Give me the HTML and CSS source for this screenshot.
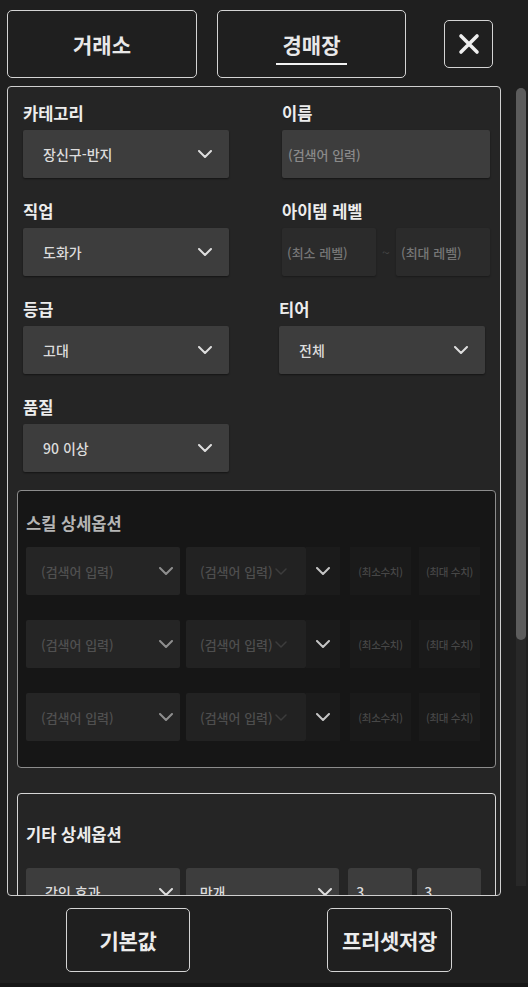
FILE: index.html
```html
<!DOCTYPE html>
<html lang="ko">
<head>
<meta charset="utf-8">
<title>경매장</title>
<link rel="stylesheet" href="styles.css">
</head>
<body>
<div class="app">
  <header class="topbar">
    <button class="tab">거래소</button>
    <button class="tab active"><span class="tab-label">경매장</span></button>
    <button class="close" aria-label="닫기">
      <svg width="22" height="22" viewBox="0 0 22 22"><path d="M3 3 L19 19 M19 3 L3 19" stroke="#eeeeee" stroke-width="3.6" stroke-linecap="round" fill="none"/></svg>
    </button>
  </header>

  <div class="body-row">
    <div class="panel">
      <div class="filters">
        <div class="field">
          <div class="label">카테고리</div>
          <div class="select"><span>장신구-반지</span><svg class="chev" width="14" height="8" viewBox="0 0 14 8"><polyline points="1,1 7,7 13,1"/></svg></div>
        </div>
        <div class="field">
          <div class="label">이름</div>
          <div class="input"><span>(검색어 입력)</span></div>
        </div>
        <div class="field">
          <div class="label">직업</div>
          <div class="select"><span>도화가</span><svg class="chev" width="14" height="8" viewBox="0 0 14 8"><polyline points="1,1 7,7 13,1"/></svg></div>
        </div>
        <div class="field">
          <div class="label">아이템 레벨</div>
          <div class="range">
            <div class="input dim"><span>(최소 레벨)</span></div>
            <span class="tilde">~</span>
            <div class="input dim"><span>(최대 레벨)</span></div>
          </div>
        </div>
        <div class="field">
          <div class="label">등급</div>
          <div class="select"><span>고대</span><svg class="chev" width="14" height="8" viewBox="0 0 14 8"><polyline points="1,1 7,7 13,1"/></svg></div>
        </div>
        <div class="field shift">
          <div class="label">티어</div>
          <div class="select"><span>전체</span><svg class="chev" width="14" height="8" viewBox="0 0 14 8"><polyline points="1,1 7,7 13,1"/></svg></div>
        </div>
        <div class="field">
          <div class="label">품질</div>
          <div class="select"><span>90 이상</span><svg class="chev" width="14" height="8" viewBox="0 0 14 8"><polyline points="1,1 7,7 13,1"/></svg></div>
        </div>
      </div>

      <section class="opt-box skill">
        <h3 class="opt-title">스킬 상세옵션</h3>
        <div class="opt-rows">
          <div class="opt-row">
            <div class="s-dd1"><span>(검색어 입력)</span><svg class="chev" width="14" height="8" viewBox="0 0 14 8"><polyline points="1,1 7,7 13,1"/></svg></div>
            <div class="s-dd2"><span>(검색어 입력)</span><svg class="chev small" width="12" height="7" viewBox="0 0 12 7"><polyline points="1,1 6,6 11,1"/></svg></div>
            <div class="s-chev"><svg class="chev" width="14" height="8" viewBox="0 0 14 8"><polyline points="1,1 7,7 13,1"/></svg></div>
            <div class="s-num">(최소수치)</div>
            <div class="s-num">(최대 수치)</div>
          </div>
          <div class="opt-row">
            <div class="s-dd1"><span>(검색어 입력)</span><svg class="chev" width="14" height="8" viewBox="0 0 14 8"><polyline points="1,1 7,7 13,1"/></svg></div>
            <div class="s-dd2"><span>(검색어 입력)</span><svg class="chev small" width="12" height="7" viewBox="0 0 12 7"><polyline points="1,1 6,6 11,1"/></svg></div>
            <div class="s-chev"><svg class="chev" width="14" height="8" viewBox="0 0 14 8"><polyline points="1,1 7,7 13,1"/></svg></div>
            <div class="s-num">(최소수치)</div>
            <div class="s-num">(최대 수치)</div>
          </div>
          <div class="opt-row">
            <div class="s-dd1"><span>(검색어 입력)</span><svg class="chev" width="14" height="8" viewBox="0 0 14 8"><polyline points="1,1 7,7 13,1"/></svg></div>
            <div class="s-dd2"><span>(검색어 입력)</span><svg class="chev small" width="12" height="7" viewBox="0 0 12 7"><polyline points="1,1 6,6 11,1"/></svg></div>
            <div class="s-chev"><svg class="chev" width="14" height="8" viewBox="0 0 14 8"><polyline points="1,1 7,7 13,1"/></svg></div>
            <div class="s-num">(최소수치)</div>
            <div class="s-num">(최대 수치)</div>
          </div>
        </div>
      </section>

      <section class="opt-box etc">
        <h3 class="opt-title">기타 상세옵션</h3>
        <div class="opt-rows">
          <div class="opt-row">
            <div class="e-dd"><span>각인 효과</span><svg class="chev" width="14" height="8" viewBox="0 0 14 8"><polyline points="1,1 7,7 13,1"/></svg></div>
            <div class="e-dd second"><span>만개</span><svg class="chev" width="14" height="8" viewBox="0 0 14 8"><polyline points="1,1 7,7 13,1"/></svg></div>
            <div class="e-num">3</div>
            <div class="e-num">3</div>
          </div>
        </div>
      </section>
    </div>
    <div class="scrollbar"><div class="thumb"></div></div>
  </div>

  <footer class="actions">
    <button class="action">기본값</button>
    <button class="action second">프리셋저장</button>
  </footer>
</div>
</body>
</html>
```

FILE: styles.css
```css
* { box-sizing: border-box; }

html, body {
  margin: 0;
  padding: 0;
  background: #1f1f1f;
}

body {
  font-family: "Noto Sans CJK KR", "Noto Sans", sans-serif;
  color: #ececec;
}

button {
  font-family: inherit;
  cursor: pointer;
}

.app {
  width: 528px;
  height: 987px;
  overflow: hidden;
  background: #1f1f1f;
}

/* ---------- top bar ---------- */
.topbar {
  display: flex;
  align-items: flex-start;
  padding: 10px 0 0 7px;
  height: 78px;
  margin-bottom: 8px;
}

.tab {
  width: 190px;
  height: 68px;
  margin: 0;
  padding: 0;
  background: #1f1f1f;
  border: 1px solid #d4d4d4;
  border-radius: 5px;
  color: #e8e8e8;
  font-size: 21px;
  font-weight: 700;
  line-height: 28px;
  display: flex;
  align-items: center;
  justify-content: center;
}

.tab + .tab {
  margin-left: 20px;
  width: 189px;
}

.tab-label {
  display: inline-block;
  padding: 7px 7px 5px;
  border-bottom: 2px solid #f2f2f2;
}

.close {
  width: 49px;
  height: 48px;
  margin: 10px 0 0 38px;
  padding: 0;
  background: #1f1f1f;
  border: 1px solid #d4d4d4;
  border-radius: 5px;
  display: flex;
  align-items: center;
  justify-content: center;
}

/* ---------- body row ---------- */
.body-row {
  display: flex;
  align-items: flex-start;
  padding-left: 7px;
}

.panel {
  width: 494px;
  height: 810px;
  overflow: hidden;
  background: #252525;
  border: 1px solid #cfcfcf;
  border-radius: 4px;
  padding: 15px 4px 0 9px;
}

.scrollbar {
  width: 10px;
  height: 798px;
  margin: 2px 0 0 15px;
  background: #282828;
  border-radius: 5px 5px 0 0;
}

.thumb {
  height: 552px;
  background: #5c5c5c;
  border-radius: 5px;
}

/* ---------- filters grid ---------- */
.filters {
  display: grid;
  grid-template-columns: 206px 208px;
  column-gap: 53px;
  row-gap: 22px;
  margin: 0 6px;
}

.label {
  font-size: 16.5px;
  font-weight: 700;
  line-height: 22px;
  height: 22px;
  margin-bottom: 6px;
  color: #ededed;
  white-space: nowrap;
}

.field.shift { margin-left: -3px; width: 206px; }

.select,
.input {
  height: 48px;
  border-radius: 2px;
  background: #3d3d3d;
  box-shadow: 0 1px 2px rgba(0, 0, 0, 0.45);
  display: flex;
  align-items: center;
  font-size: 14px;
}

.select {
  justify-content: space-between;
  padding: 0 17px 0 20px;
  color: #dcdcdc;
  font-weight: 500;
}

.input {
  padding: 0 6px;
  color: #8a8a8a;
  font-size: 13px;
  font-weight: 500;
}

.range {
  display: flex;
  align-items: center;
}

.input.dim {
  width: 94px;
  background: #2b2b2b;
  color: #767676;
  box-shadow: 0 1px 2px rgba(0, 0, 0, 0.3);
  padding: 0 5px;
  white-space: nowrap;
}

.tilde {
  width: 20px;
  text-align: center;
  color: #454545;
  font-size: 14px;
}

.chev {
  fill: none;
  stroke: #dedede;
  stroke-width: 2;
  stroke-linecap: round;
  stroke-linejoin: round;
  flex: none;
}

/* ---------- option boxes ---------- */
.opt-box {
  width: 479px;
  border-radius: 4px;
}

.opt-title {
  margin: 0;
  font-size: 16.5px;
  font-weight: 700;
  line-height: 22px;
  height: 22px;
}

.opt-rows {
  display: flex;
  flex-direction: column;
  gap: 25px;
}

.opt-row {
  display: flex;
  height: 48px;
}

.skill {
  margin-top: 18px;
  background: #161616;
  border: 1px solid #8c8c8c;
  padding: 21px 15px 26px 8px;
}

.skill .opt-title {
  color: #b5b5b5;
  margin-bottom: 13px;
}

.s-dd1,
.s-dd2,
.s-chev,
.s-num {
  height: 48px;
  display: flex;
  align-items: center;
  white-space: nowrap;
  font-weight: 500;
}

.s-dd1 {
  width: 154px;
  background: #252525;
  border-radius: 2px;
  justify-content: space-between;
  padding: 0 7px 0 15px;
  font-size: 13px;
  color: #505050;
}

.s-dd1 .chev { stroke: #8e8e8e; }

.s-dd2 {
  width: 120px;
  margin-left: 6px;
  background: #222222;
  border-radius: 2px;
  padding: 0 0 0 14px;
  font-size: 13px;
  color: #4e4e4e;
  overflow: hidden;
}

.s-dd2 .chev.small {
  stroke: #3c3c3c;
  stroke-width: 1.5;
  margin-left: 2px;
}

.s-chev {
  width: 34px;
  background: #1b1b1b;
  justify-content: center;
}

.s-chev .chev { stroke: #c4c4c4; }

.s-num {
  width: 61px;
  background: #1a1a1a;
  justify-content: center;
  font-size: 10.5px;
  color: #474747;
  letter-spacing: -0.3px;
}

.s-chev + .s-num { margin-left: 10px; }
.s-num + .s-num { margin-left: 8px; }

.etc {
  margin-top: 25px;
  background: #252525;
  border: 1px solid #d6d6d6;
  padding: 29px 14px 30px 8px;
}

.etc .opt-title {
  color: #ededed;
  margin-bottom: 23px;
}

.e-dd,
.e-num {
  height: 48px;
  display: flex;
  align-items: center;
  background: #3d3d3d;
  border-radius: 3px;
  font-size: 14px;
  font-weight: 500;
  color: #dcdcdc;
}

.e-dd {
  width: 154px;
  justify-content: space-between;
  padding: 0 7px 0 19px;
}

.e-dd.second {
  margin-left: 6px;
  padding-left: 14px;
}

.e-num {
  width: 64px;
  padding-left: 8px;
  margin-left: 9px;
}

.e-num + .e-num {
  margin-left: 5px;
  padding-left: 7px;
}

/* ---------- footer actions ---------- */
.actions {
  display: flex;
  padding: 12px 0 11px 66px;
  border-bottom: 4px solid #161616;
}

.action {
  width: 124px;
  height: 64px;
  margin: 0;
  padding: 0;
  background: #1f1f1f;
  border: 1px solid #d4d4d4;
  border-radius: 5px;
  color: #ececec;
  font-size: 21px;
  font-weight: 700;
  letter-spacing: -0.3px;
}

.action.second {
  width: 125px;
  margin-left: 137px;
}
```
